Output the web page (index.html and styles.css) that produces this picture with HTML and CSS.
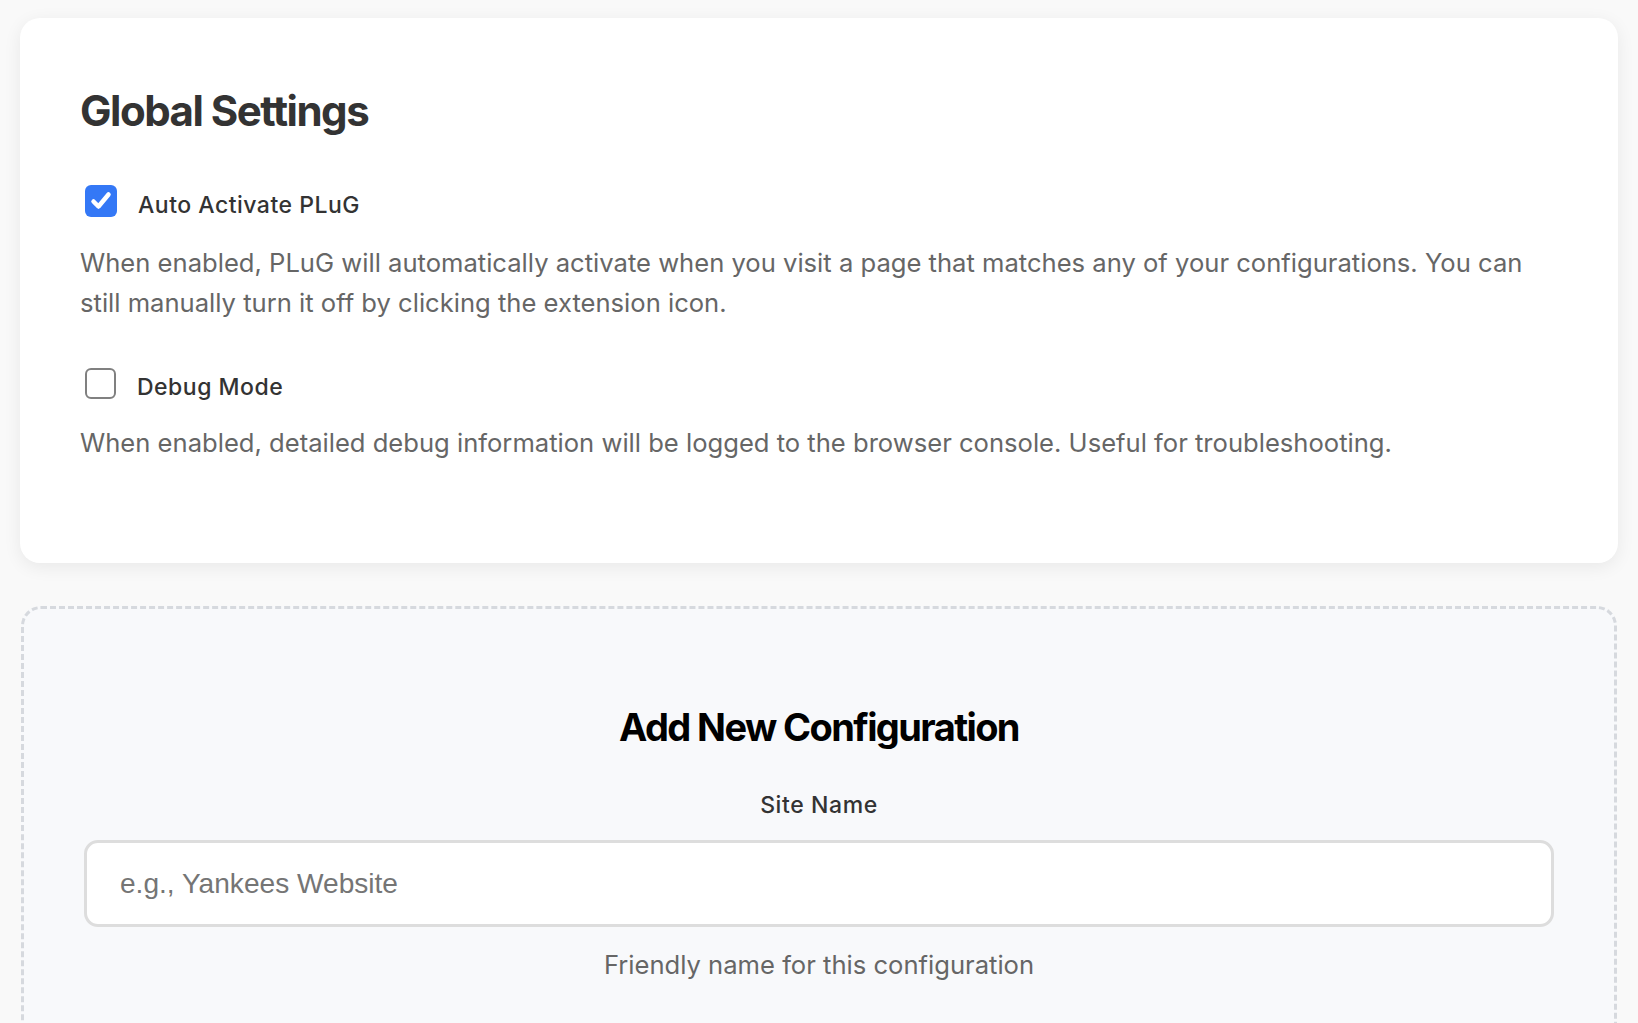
FILE: index.html
```html
<!DOCTYPE html>
<html lang="en">
<head>
<meta charset="utf-8">
<title>PLuG Options</title>
<link rel="stylesheet" href="styles.css">
</head>
<body>
<main class="page">
  <section class="card">
    <h2 class="card-title">Global Settings</h2>
    <div class="setting">
      <label class="check-row">
        <span class="box box-on">
          <svg viewBox="0 0 32 32" width="32" height="32" aria-hidden="true"><path d="M8.5 16.5 L13.5 21.5 L23.5 9.5" fill="none" stroke="#fff" stroke-width="4.5" stroke-linecap="round" stroke-linejoin="round"/></svg>
        </span>
        <span class="check-label">Auto Activate PLuG</span>
      </label>
      <p class="desc">When enabled, PLuG will automatically activate when you visit a page that matches any of your configurations. You can still manually turn it off by clicking the extension icon.</p>
    </div>
    <div class="setting setting-last">
      <label class="check-row">
        <span class="box box-off"></span>
        <span class="check-label">Debug Mode</span>
      </label>
      <p class="desc">When enabled, detailed debug information will be logged to the browser console. Useful for troubleshooting.</p>
    </div>
  </section>

  <section class="new-config">
    <h3 class="new-title">Add New Configuration</h3>
    <div class="field">
      <label class="field-label" for="siteName">Site Name</label>
      <input class="text-input" id="siteName" type="text" placeholder="e.g., Yankees Website">
      <p class="hint">Friendly name for this configuration</p>
    </div>
  </section>
</main>
</body>
</html>
```

FILE: styles.css
```css
* { box-sizing: border-box; }

html, body {
  margin: 0;
  padding: 0;
}

body {
  background: #f9f9f9;
  font-family: Inter, "Noto Sans", "Liberation Sans", sans-serif;
  color: #333;
}

.page {
  padding: 18px 20px 0;
  display: flex;
  flex-direction: column;
  gap: 43px;
}

.card {
  background: #fff;
  border-radius: 20px;
  box-shadow: 0 4px 18px rgba(0, 0, 0, 0.07);
  padding: 60px;
}

.card-title {
  margin: 8px 0 49px;
  font-size: 42px;
  line-height: 50px;
  font-weight: 700;
  color: #333;
  letter-spacing: -1.5px;
}

.setting {
  margin-bottom: 44px;
}

.setting-last {
  margin-bottom: 40px;
}

.check-row {
  display: flex;
  align-items: flex-start;
  height: 32px;
  gap: 21px;
}

.box {
  width: 32px;
  height: 32px;
  flex: none;
  margin-left: 5px;
  border-radius: 6px;
  display: flex;
  align-items: center;
  justify-content: center;
}

.box-on {
  background: #3478f6;
}

.box-off {
  width: 31px;
  height: 31px;
  margin-top: 1px;
  border: 2.5px solid #808080;
  background: #fff;
}

.check-label {
  font-size: 23px;
  line-height: 32px;
  padding-top: 4px;
  font-weight: 500;
  color: #333;
  letter-spacing: 0.5px;
}

.desc {
  margin: 26px 0 0;
  font-size: 25.6px;
  line-height: 40px;
  color: #666;
}

.setting-last .desc {
  margin-top: 24px;
}

.new-config {
  background: #f8f9fb;
  border: 3px dashed #d6d9de;
  border-radius: 20px;
  margin: 0 1px;
  padding: 60px 60px 200px;
  text-align: center;
}

.new-title {
  margin: 35px 0 39px;
  font-size: 38px;
  line-height: 46px;
  font-weight: 700;
  color: #000;
  letter-spacing: -1.6px;
}

.field {
  display: flex;
  flex-direction: column;
  align-items: center;
}

.field-label {
  font-size: 23px;
  line-height: 32px;
  font-weight: 500;
  color: #333;
  letter-spacing: 0.6px;
}

.text-input {
  margin-top: 19px;
  width: 100%;
  height: 87px;
  border: 3px solid #dddddd;
  border-radius: 14px;
  background: #fff;
  padding: 0 33px;
  font-family: "Liberation Sans", Arial, sans-serif;
  font-size: 28.1px;
  color: #333;
  outline: none;
}

.text-input::placeholder {
  color: #757575;
}

.hint {
  margin: 18px 0 0;
  font-size: 25.6px;
  line-height: 40px;
  color: #666;
}
```
